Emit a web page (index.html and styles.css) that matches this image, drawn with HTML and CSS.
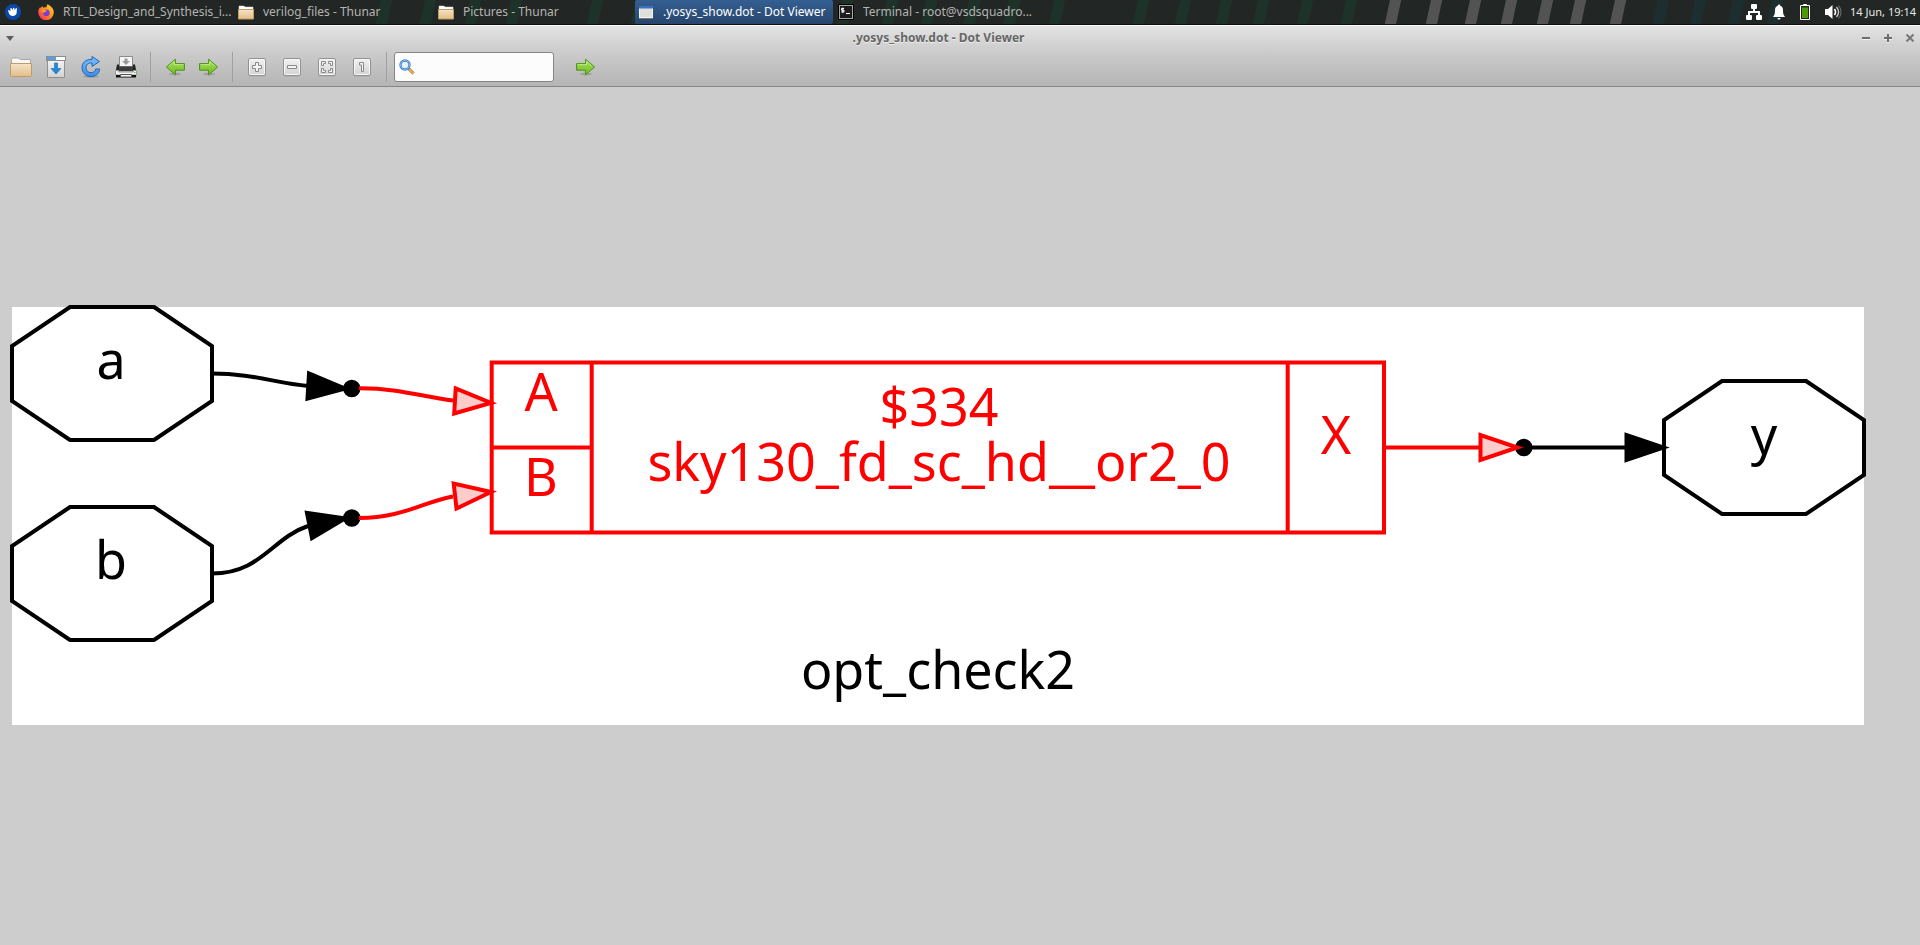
FILE: index.html
```html
<!DOCTYPE html>
<html lang="en">
<head>
<meta charset="utf-8">
<title>.yosys_show.dot - Dot Viewer</title>
<link rel="stylesheet" href="styles.css">
</head>
<body>
<svg class="defs" width="0" height="0" aria-hidden="true">
  <defs>
    <linearGradient id="tan" x1="0" y1="0" x2="0" y2="1"><stop offset="0" stop-color="#f6e3c6"/><stop offset="1" stop-color="#e2bd8a"/></linearGradient>
    <linearGradient id="green" x1="0" y1="0" x2="0" y2="1"><stop offset="0" stop-color="#a8e05c"/><stop offset="1" stop-color="#6fbe22"/></linearGradient>
    <linearGradient id="blue" x1="0" y1="0" x2="0" y2="1"><stop offset="0" stop-color="#7cc0fa"/><stop offset="1" stop-color="#3d8ee8"/></linearGradient>
    <linearGradient id="fire" x1="1" y1="0" x2="0" y2="1"><stop offset="0" stop-color="#ffe226"/><stop offset=".5" stop-color="#ff8a1f"/><stop offset="1" stop-color="#f5156c"/></linearGradient>
    <linearGradient id="key" x1="0" y1="0" x2="0" y2="1"><stop offset="0" stop-color="#f2f2f2"/><stop offset="1" stop-color="#d2d2d2"/></linearGradient>
    <symbol id="folder16" viewBox="0 0 16 16">
      <path d="M1 2h5l1 1h8v4H1z" fill="#fff" stroke="#d8d8d8" stroke-width=".5"/>
      <path d="M.5 5.500h15v9.500H.5z" fill="url(#tan)" stroke="#c49a62"/>
    </symbol>
    <symbol id="arrow" viewBox="0 0 20 20">
      <ellipse cx="10" cy="17" rx="6" ry="1.500" fill="#000" opacity=".15"/>
      <path d="M.6 6.600h9V2.200l9 7.800-9 7.800v-4.600h-9z" fill="url(#green)" stroke="#4f8f1c"/>
      <path d="M1.700 7.700h9V4.500l5 4.500" fill="none" stroke="#c9f090" stroke-width=".8"/>
    </symbol>
    <symbol id="keycap" viewBox="0 0 20 20">
      <path d="M2 19h16" stroke="#999" opacity=".5"/>
      <rect x="1.500" y="1.500" width="17" height="17" rx="1.500" fill="url(#key)" stroke="#929292"/>
      <rect x="2.500" y="2.500" width="15" height="15" rx="1" fill="none" stroke="#f7f7f7"/>
    </symbol>
  </defs>
</svg>

<header class="panel">
  <svg class="stripes" width="1920" height="24" aria-hidden="true">
    <g stroke="#1d3329" stroke-width="11">
      <path d="M381 26l6-28M425 26l6-28M470 26l6-28M511 26l6-28M592 26l6-28M636 26l6-28M842 26l6-28M887 26l6-28M926 26l6-28M969 26l6-28M1009 26l6-28M1054 26l6-28M1138 26l6-28M1180 26l6-28M1221 26l6-28M1258 26l6-28M1302 26l6-28M1346 26l6-28"/>
    </g>
    <path d="M1390 26l6-28M1431 26l6-28M1470 26l6-28M1506 26l6-28M1542 26l6-28M1575 26l6-28M1615 26l6-28" stroke="#535353" stroke-width="11"/>
    <path d="M1658 26l6-28M1695 26l6-28M1733 26l6-28M1772 26l6-28" stroke="#1d2e30" stroke-width="11"/>
  </svg>
  <button class="launcher" aria-label="Applications">
    <svg width="16" height="16" viewBox="0 0 16 16"><circle cx="8" cy="8" r="8" fill="#0b47a8"/><path d="M3 6.500c.8-.6 1.800-.2 2.600.5L5.200 4.500l1.200-.4 1 1.900.8-2.200 1.100.2.300 2.200L11 4l1 .6-.3 2.900c.4 2.500-1 4.200-3.500 4.400-2.200.1-3.600-.6-4.200-2.400z" fill="#fff"/></svg>
  </button>
  <nav class="tasks" aria-label="Windows">
    <button class="task">
      <svg width="16" height="16" viewBox="0 0 16 16"><path d="M9.500.2C12 1.500 15.800 4 15.800 8.500A7.700 7.700 0 0 1 .3 8.500C.2 6 1.200 4.200 2.300 3l.4 1.300L4.300 2l.8 1.700C7 3 8 3.500 8.500 3.200 8.600 2 8.800 1 9.500.2z" fill="url(#fire)"/><circle cx="8.300" cy="8.800" r="3.400" fill="#7b3fd0"/><path d="M4 6c2-.8 4 0 5 1.200-2 .2-2 1.300-3.500 1.500C4.500 8.600 4 7 4 6z" fill="#ff9a2b"/></svg>
      <span>RTL_Design_and_Synthesis_i...</span>
    </button>
    <button class="task"><svg width="16" height="16"><use href="#folder16"/></svg><span>verilog_files - Thunar</span></button>
    <button class="task"><svg width="16" height="16"><use href="#folder16"/></svg><span>Pictures - Thunar</span></button>
    <button class="task active">
      <svg width="16" height="16" viewBox="0 0 16 16"><rect x="1.500" y="2.500" width="13" height="11" fill="#dfe0dc" stroke="#f4f4f2"/><path d="M1 2h14v2.500H1z" fill="#3b6fc0"/><path d="M1 14.500h14" stroke="#777"/></svg>
      <span>.yosys_show.dot - Dot Viewer</span>
    </button>
    <button class="task">
      <svg width="16" height="16" viewBox="0 0 16 16"><rect x=".5" y=".5" width="15" height="15" fill="#1d1d1d" stroke="#000"/><rect x="1.500" y="1.500" width="13" height="13" fill="none" stroke="#a5a5a5"/><path d="M6 4.500H3.500v1.700H6v1.700H3.300M4.800 3.500V9M8 9.500h4" fill="none" stroke="#fff"/></svg>
      <span>Terminal - root@vsdsquadro...</span>
    </button>
  </nav>
  <div class="tray">
    <svg width="16" height="16" viewBox="0 0 16 16"><path d="M5 1q0-1 1-1h4q1 0 1 1v3q0 1-1 1H9v2h5v4h1q1 0 1 1v3q0 1-1 1h-4q-1 0-1-1v-3q0-1 1-1h1V9H4v2h1q1 0 1 1v3q0 1-1 1H1q-1 0-1-1v-3q0-1 1-1h1V7h5V5H6q-1 0-1-1z" fill="#fff"/></svg>
    <svg width="12" height="16" viewBox="0 0 12 16"><path d="M6 .5c.8 0 1.200.5 1.200 1.200C9.500 2.500 10 4 10 6.500c0 3 .5 4.500 2 6.500H0c1.500-2 2-3.500 2-6.500 0-2.500.5-4 2.800-4.800C4.800 1 5.200.5 6 .5zM4.500 14h3c0 1-.7 1.500-1.500 1.500S4.500 15 4.500 14z" fill="#fff"/></svg>
    <svg width="10" height="16" viewBox="0 0 10 16"><path d="M3.500 1.500v-1h3v1M.5 1.500h9v14h-9z" fill="none" stroke="#fff"/><path d="M2 3.500h6v10.500H2z" fill="#4e9a06"/></svg>
    <svg width="17" height="16" viewBox="0 0 17 16"><path d="M0 5h3l4.500-4v14L3 11H0z" fill="#fff"/><path d="M9.500 5c1.300 1.800 1.300 4.200 0 6" fill="none" stroke="#fff" stroke-width="1.500"/><path d="M11.500 3c2.500 3 2.500 7 0 10" fill="none" stroke="#ccc" stroke-width="1.300"/><path d="M13.500 1.500c3.300 4 3.300 9 0 13" fill="none" stroke="#777"/></svg>
    <time>14 Jun, 19:14</time>
  </div>
</header>

<section class="chrome">
  <div class="titlebar">
    <button class="wm" aria-label="Window menu"><svg width="8" height="5" viewBox="0 0 8 5"><path d="M0 0h8L4 5z" fill="#5e5e5e"/></svg></button>
    <h1>.yosys_show.dot - Dot Viewer</h1>
    <div class="controls">
      <button class="wm" aria-label="Minimize"><svg width="10" height="10" viewBox="0 0 10 10"><path d="M1 6.500h8" stroke="#f3f3f3"/><path d="M1 5h8" stroke="#6e6e6e" stroke-width="2"/></svg></button>
      <button class="wm" aria-label="Maximize"><svg width="10" height="10" viewBox="0 0 10 10"><path d="M1 6.500h8M4 9.500h2" stroke="#f3f3f3"/><path d="M1 5h8M5 1v8" stroke="#6e6e6e" stroke-width="2"/></svg></button>
      <button class="wm" aria-label="Close"><svg width="10" height="10" viewBox="0 0 10 10"><path d="M1.500 2.500l7 7M8.500 2.500l-7 7" stroke="#f3f3f3"/><path d="M1.500 1.500l7 7M8.500 1.500l-7 7" stroke="#777" stroke-width="2"/></svg></button>
    </div>
  </div>
  <div class="toolbar">
    <button class="tool" aria-label="Open"><svg width="24" height="24" viewBox="0 0 24 24"><path d="M2.500 20V4.500l1-1.500h6l1.500 1.500h10.500V20z" fill="#f7f7f7" stroke="#a9a9a9"/><path d="M1.500 8.500h21V20.500q0 1-1 1h-19q-1 0-1-1z" fill="url(#tan)" stroke="#c09a68"/></svg></button>
    <button class="tool" aria-label="Reload file"><svg width="24" height="24" viewBox="0 0 24 24"><path d="M3.500 5.500h17v17h-17z" fill="url(#key)" stroke="#8f8f8f"/><rect x="2.500" y="1.500" width="19" height="4" fill="#fff" stroke="#8d8d8d"/><path d="M3 2h9v3H3z" fill="#5a9fd8"/><path d="M10.500 8h3v5.500h3.500L12 19l-5-5.500h3.500z" fill="#2288d8" stroke="#1769ab" stroke-width=".6"/></svg></button>
    <button class="tool" aria-label="Refresh"><svg width="24" height="24" viewBox="0 0 24 24"><ellipse cx="12" cy="21.500" rx="8" ry="1.500" opacity=".15"/><path d="M13 1.500v3C6.500 4 3 8 3 12.700c0 5 4 8.800 9 8.800 4.500 0 8.300-2.800 8.700-7.500h-4c-.5 2.500-2.500 3.700-4.700 3.700-2.800 0-5-2-5-5 0-2.700 2-5 6-4.700v3.500L20.500 6.500z" fill="url(#blue)" stroke="#2463b4"/></svg></button>
    <button class="tool" aria-label="Print"><svg width="24" height="24" viewBox="0 0 24 24"><path d="M3 9.500h3V15H2zM21 9.500h-3V15h4z" fill="#222"/><path d="M5.500 1.500h13v10h-13z" fill="#f5f5f5" stroke="#8b8b8b"/><path d="M10.500 3.500h3V6H16l-4 4-4-4h2.500z" fill="#999"/><path d="M5 11.500h14v4.500H5z" fill="#3c3c3c"/><path d="M1.500 15.500h3v1.500h15v-1.500h3V20h-21z" fill="#f4f4f4" stroke="#999"/><path d="M2 20h20v2.500H2z" fill="#111"/><path d="M6.500 19.500h11v2.500h-11z" fill="#f4f4f4" stroke="#555"/><path d="M20 17.500h1.500" stroke="#4fd040"/></svg></button>
    <span class="sep"></span>
    <button class="tool arrow" aria-label="Back"><svg class="flip" width="20" height="20"><use href="#arrow"/></svg></button>
    <button class="tool arrow" aria-label="Forward"><svg width="20" height="20"><use href="#arrow"/></svg></button>
    <span class="sep"></span>
    <button class="tool" aria-label="Zoom in"><svg width="20" height="20" viewBox="0 0 20 20"><use href="#keycap"/><path d="M8.500 5.500h3v3h3v3h-3v3h-3v-3h-3v-3h3z" fill="#f4f4f4" stroke="#8a8a8a"/></svg></button>
    <button class="tool" aria-label="Zoom out"><svg width="20" height="20" viewBox="0 0 20 20"><use href="#keycap"/><path d="M5.500 8.500h9v3h-9z" fill="#f4f4f4" stroke="#8a8a8a"/></svg></button>
    <button class="tool" aria-label="Fit"><svg width="20" height="20" viewBox="0 0 20 20"><use href="#keycap"/><path d="M4.500 4.500h4v2h-2v2h-2zM15.500 4.500h-4v2h2v2h2zM4.500 15.500h4v-2h-2v-2h-2zM15.500 15.500h-4v-2h2v-2h2z" fill="#f4f4f4" stroke="#8a8a8a"/></svg></button>
    <button class="tool" aria-label="Normal size"><svg width="20" height="20" viewBox="0 0 20 20"><use href="#keycap"/><path d="M7.500 5.500h4v9h-2v-6.500h-2z" fill="#f4f4f4" stroke="#8a8a8a"/></svg></button>
    <span class="sep last"></span>
    <label class="search">
      <svg width="16" height="16" viewBox="0 0 16 16"><path d="M9.500 9.500l5 5" stroke="#8a6221" stroke-width="3"/><path d="M10 10l4.500 4.500" stroke="#eeb453" stroke-width="1.800"/><circle cx="6" cy="6" r="4.500" fill="#e4f0fa" stroke="#3f7fc4" stroke-width="2.400"/><circle cx="6" cy="6" r="4.500" fill="none" stroke="#86bbee"/></svg>
      <input type="text" aria-label="Find">
    </label>
    <button class="tool arrow" aria-label="Find next"><svg width="20" height="20"><use href="#arrow"/></svg></button>
  </div>
</section>

<main class="canvas">
  <svg class="graph" viewBox="12 307 1852 418" role="img" aria-label="opt_check2">
    <path class="paper" d="M12 307h1852v418H12z"/>
    <g class="node">
      <path d="M154 307l58 39v55l-58 39H70l-58-39v-55l58-39z"/>
      <path d="M154 507l58 39v55l-58 39H70l-58-39v-55l58-39z"/>
      <path d="M1806 381l58 39v55l-58 39h-84l-58-39v-55l58-39z"/>
    </g>
    <g class="node">
      <path d="M212 373.500C253 373.500 275 383 308 386"/>
      <path d="M212 573.500C261 573.500 272 538 308 526"/>
      <path d="M1532 447.500h93"/>
    </g>
    <g class="tip">
      <path d="M309 373.500l-1.500 25L345 388.500z"/>
      <path d="M307 513l5 25 33-19.500z"/>
      <path d="M1626.500 435v25l37-12.500z"/>
      <circle cx="351.800" cy="388.500" r="6.700"/>
      <circle cx="351.800" cy="518" r="6.700"/>
      <circle cx="1523.800" cy="447.500" r="6.700"/>
    </g>
    <g class="cell">
      <path d="M491.700 362.500H1384v170H491.700zM591.700 362.500v170M491.700 447.500h100M1287.700 362.500v170"/>
      <path d="M359 388.300C400 388 422 397 453 400.500"/>
      <path d="M359 518C402 518 423 502 453 496.500"/>
      <path d="M1384 447.500h95"/>
      <path class="head" d="M455.700 388.500l-1.500 25L491 403z"/>
      <path class="head" d="M453.700 483.500l2.800 25L491 492z"/>
      <path class="head" d="M1480.500 435v25l37-12.500z"/>
    </g>
    <g class="label">
      <text x="111" y="379">a</text>
      <text x="111" y="579">b</text>
      <text x="1764" y="454">y</text>
      <text x="938" y="689">opt_check2</text>
    </g>
    <g class="label red">
      <text x="541" y="411">A</text>
      <text x="541" y="496">B</text>
      <text x="939" y="426">$334</text>
      <text x="939" y="481">sky130_fd_sc_hd__or2_0</text>
      <text x="1336" y="454">X</text>
    </g>
  </svg>
</main>
</body>
</html>
```
FILE: styles.css
```css
* { box-sizing: border-box; }

body {
  margin: 0;
  min-height: 100vh;
  display: flex;
  flex-direction: column;
  background: #cdcdcd;
  font: 12px/16px "Noto Sans", sans-serif;
}

button {
  display: flex;
  align-items: center;
  margin: 0;
  padding: 0;
  border: 0;
  background: none;
  color: inherit;
  font: inherit;
}

svg { display: block; flex: none; }

.defs { position: absolute; }

.panel {
  position: relative;
  display: flex;
  height: 25px;
  overflow: hidden;
  border-bottom: 1px solid #150f11;
  background: #222725;
  color: #b4b4b2;
}

.stripes { position: absolute; top: 0; left: 0; }

.launcher, .tasks, .tray { position: relative; }

.launcher { width: 35px; padding-left: 5px; }

.tasks { display: flex; flex: 1; }

.task {
  width: 198px;
  margin-right: 2px;
  padding: 0 3px;
  gap: 9px;
  white-space: nowrap;
}

.task.active {
  border-radius: 2px;
  background: linear-gradient(#345f92, #28456c);
  color: #fff;
}

.tray {
  display: flex;
  align-items: center;
  gap: 15px;
  padding-right: 4px;
  color: #e8e8e8;
}

.tray svg:first-child { margin-right: -4px; }
.tray time { font-size: 11px; margin-left: -7px; }

.chrome {
  border-top: 1px solid #fff;
  border-bottom: 1px solid #868686;
  background: linear-gradient(#e3e3e3, #cdcdcd 40%, #b5b5b5);
}

.titlebar {
  display: grid;
  grid-template-columns: 1fr auto 1fr;
  align-items: center;
  height: 24px;
  padding: 0 5px 0 6px;
}

.titlebar h1 {
  margin: 0 44px 0 0;
  color: #666;
  font-size: 12px;
  font-weight: 700;
  line-height: 16px;
  text-shadow: 0 1px #eee;
}

.controls { display: flex; justify-content: flex-end; gap: 12px; }

.toolbar {
  display: flex;
  align-items: center;
  height: 36px;
  padding: 0 9px 2px;
}

.tool { justify-content: center; width: 24px; margin-right: 11px; }
.tool.arrow { width: 24px; margin-right: 10px; }
.flip { transform: scaleX(-1); }

.sep { width: 1px; height: 30px; margin: 0 12px 0 1px; background: #a0a0a0; }
.sep.last { margin-right: 7px; }

.search {
  display: flex;
  align-items: center;
  width: 160px;
  height: 30px;
  margin-right: 20px;
  padding: 0 4px;
  border: 1px solid #858585;
  border-radius: 3px;
  background: #fcfcfc;
}

.search input {
  flex: 1;
  min-width: 0;
  border: 0;
  outline: 0;
  background: none;
  font: inherit;
}

.canvas {
  flex: 1;
  display: flex;
  align-items: center;
  padding: 0 56px 0 12px;
}

.graph { width: 100%; flex: 1; overflow: visible; }

.paper { fill: #fff; }
.node { fill: none; stroke: #000; stroke-width: 4px; }
.tip { fill: #000; stroke: #000; stroke-width: 4px; }
.cell { fill: none; stroke: #f00; stroke-width: 4px; }
.cell .head { fill: #fcc; }

.label { fill: #000; font-size: 52px; text-anchor: middle; }
.label.red { fill: #f00; }
```
